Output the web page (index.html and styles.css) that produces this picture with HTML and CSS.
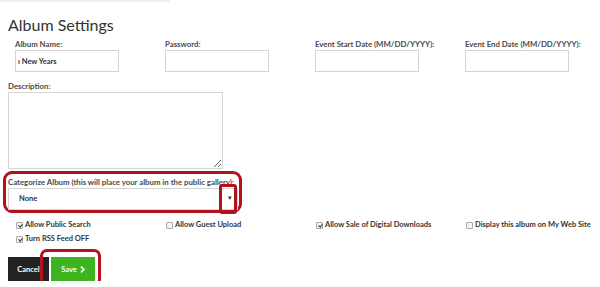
FILE: index.html
```html
<!DOCTYPE html>
<html lang="en">
<head>
    <meta charset="UTF-8">
    <meta name="viewport" content="width=device-width, initial-scale=1.0">
    <title>Album Settings</title>
    <link rel="stylesheet" href="styles.css">
</head>
<body>
    <div class="top-line"></div>
    <div class="page">
        <h1>Album Settings</h1>

        <div class="field-row">
            <div class="field">
                <label for="name">Album Name:</label>
                <input type="text" id="name" value="ı New Years">
            </div>
            <div class="field">
                <label for="password">Password:</label>
                <input type="text" id="password">
            </div>
            <div class="field">
                <label for="start">Event Start Date (MM/DD/YYYY):</label>
                <input type="text" id="start">
            </div>
            <div class="field">
                <label for="end">Event End Date (MM/DD/YYYY):</label>
                <input type="text" id="end">
            </div>
        </div>

        <div class="field description">
            <label for="desc">Description:</label>
            <textarea id="desc"></textarea>
        </div>

        <div class="category-box">
            <label for="category">Categorize Album (this will place your album in the public gallery):</label>
            <div class="select-wrap">
                <div class="select" id="category">None</div>
                <span class="arrow">&#9662;</span>
                <span class="arrow-mark"></span>
            </div>
        </div>

        <div class="checks">
            <label class="check"><span class="box checked"></span>Allow Public Search</label>
            <label class="check"><span class="box"></span>Allow Guest Upload</label>
            <label class="check"><span class="box checked"></span>Allow Sale of Digital Downloads</label>
            <label class="check"><span class="box"></span>Display this album on My Web Site</label>
            <label class="check"><span class="box checked"></span>Turn RSS Feed OFF</label>
        </div>

        <div class="buttons">
            <button class="btn cancel">Cancel</button>
            <div class="save-wrap">
                <button class="btn save">Save
                    <svg width="5" height="7" viewBox="0 0 5 7"><path d="M1 0.7 L3.8 3.5 L1 6.3" fill="none" stroke="#fff" stroke-width="1.7"/></svg>
                </button>
                <span class="save-mark"></span>
            </div>
        </div>
    </div>
</body>
</html>
```

FILE: styles.css
```css
:root {
    --text: #444;
    --border: #d4d4d4;
    --mark: #b3121d;
    --green: #3db521;
}

body {
    margin: 0;
    font-family: 'Lato', sans-serif;
    color: var(--text);
    background: white;
    overflow: hidden;
}

.top-line {
    width: 170px;
    height: 2px;
    background: #f2f2f2;
}

.page {
    padding: 0 0 0 8px;
}

h1 {
    font-weight: 400;
    font-size: 16px;
    color: #333;
    margin: 13px 0 0 0;
    line-height: 20px;
}

.field-row {
    display: grid;
    grid-template-columns: repeat(4, 150px);
    padding-left: 7px;
    margin-top: 4px;
}

.field label,
.category-box label {
    display: block;
    font-size: 7.8px;
    font-weight: 700;
    line-height: 10px;
    margin-bottom: 1px;
    color: #4a4a4a;
    white-space: nowrap;
}

input[type="text"] {
    display: block;
    box-sizing: border-box;
    width: 104px;
    height: 22px;
    border: 1px solid var(--border);
    padding: 0 2px;
    font-family: 'Lato', sans-serif;
    font-size: 7.5px;
    font-weight: 700;
    color: #333;
    margin: 0;
}

.description {
    margin-top: 9px;
}

textarea {
    display: block;
    box-sizing: border-box;
    width: 215px;
    height: 77px;
    border: 1px solid var(--border);
    margin: 0;
}

.category-box {
    box-sizing: border-box;
    width: 239px;
    margin: 2px 0 0 -5px;
    border: 3px solid var(--mark);
    border-radius: 9px;
    padding: 3px 1px 0 2px;
}

.select-wrap {
    position: relative;
}

.select {
    box-sizing: border-box;
    width: 230px;
    height: 22px;
    border: 1px solid var(--border);
    padding-left: 10px;
    font-size: 7.5px;
    font-weight: 700;
    line-height: 20px;
    color: #333;
}

.arrow {
    position: absolute;
    left: 220px;
    top: 5px;
    font-size: 7px;
    color: #333;
}

.arrow-mark {
    position: absolute;
    left: 211px;
    top: -4px;
    width: 12px;
    height: 24px;
    border: 3px solid var(--mark);
    border-radius: 3px;
}

.checks {
    display: grid;
    grid-template-columns: repeat(4, 150px);
    padding-left: 8px;
    margin-top: 7px;
    row-gap: 4px;
}

.check {
    display: flex;
    align-items: center;
    gap: 2px;
    font-size: 7.5px;
    font-weight: 700;
    line-height: 10px;
    color: #333;
}

.box {
    box-sizing: border-box;
    width: 7px;
    height: 7px;
    border: 1px solid #aaa;
    border-radius: 1px;
    background: #f4f4f4;
    position: relative;
}

.box.checked::after {
    content: "";
    position: absolute;
    left: 1.5px;
    top: 0;
    width: 1.5px;
    height: 3px;
    border-right: 1.2px solid #333;
    border-bottom: 1.2px solid #333;
    transform: rotate(40deg);
}

.buttons {
    display: flex;
    gap: 2px;
    margin-top: 13px;
}

.btn {
    border: none;
    height: 24px;
    font-family: 'Lato', sans-serif;
    font-size: 7.5px;
    font-weight: 700;
    color: white;
    padding: 0;
    cursor: pointer;
}

.cancel {
    width: 41px;
    background: #222;
}

.save-wrap {
    position: relative;
}

.save {
    width: 44px;
    background: var(--green);
    display: flex;
    align-items: center;
    justify-content: center;
    gap: 3px;
}

.save-mark {
    position: absolute;
    left: -11px;
    top: -8px;
    width: 55px;
    height: 31px;
    border: 3px solid var(--mark);
    border-radius: 7px;
}
```
